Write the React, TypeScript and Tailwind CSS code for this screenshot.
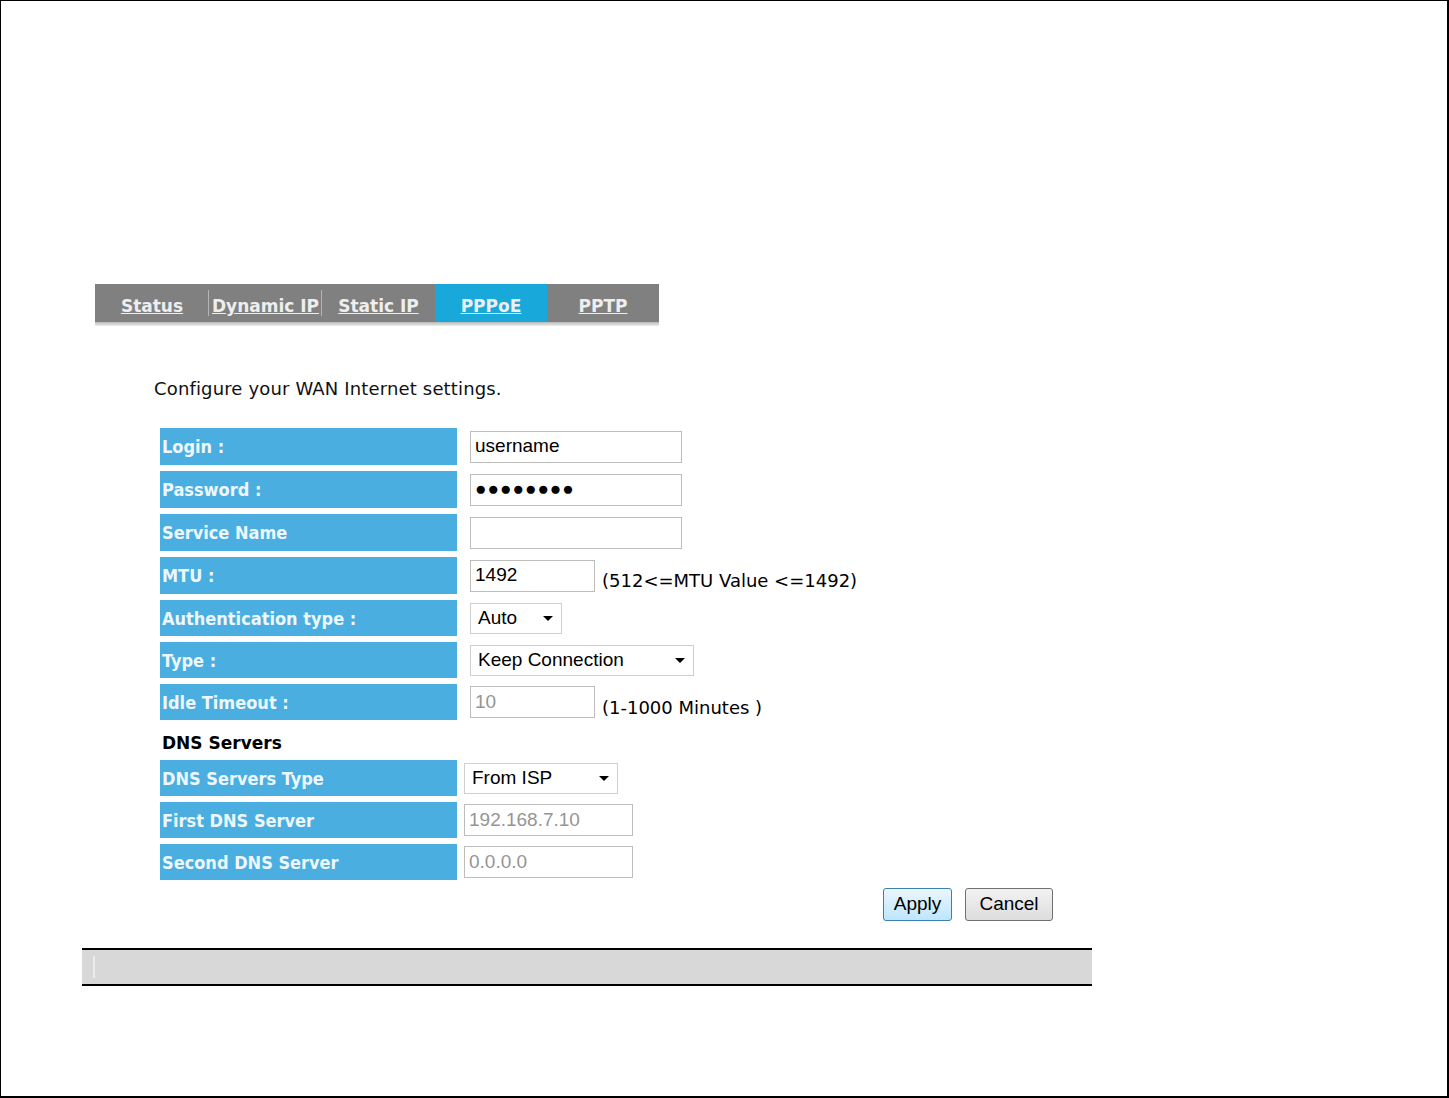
import React from "react";
import clsx from "clsx";

const tabs = [
  { label: "Status", w: "w-[114px]", sep: false, active: false },
  { label: "Dynamic IP", w: "w-[113px]", sep: true, active: false },
  { label: "Static IP", w: "w-[113px]", sep: true, active: false },
  { label: "PPPoE", w: "w-[112px]", sep: false, active: true },
  { label: "PPTP", w: "w-[112px]", sep: false, active: false },
];

function TabBar() {
  return (
    <div className="ml-[94px] w-[564px]">
      <div className="flex h-[38px] bg-[#808080]">
        {tabs.map((t) => (
          <div
            key={t.label}
            className={clsx(
              "relative flex items-center justify-center pt-[6px] font-['DejaVu_Sans',sans-serif] text-[17px] leading-[20px] font-bold text-[#eeeeee] underline",
              t.w,
              t.active && "bg-[#19a8da]"
            )}
          >
            {t.sep && <div className="absolute left-[-1px] top-[6px] h-[26px] w-px bg-[#b5b5b5]" />}
            {t.label}
          </div>
        ))}
      </div>
      <div className="h-[4px] bg-gradient-to-b from-[#b8b8b8] to-[#eeeeee]" />
    </div>
  );
}

function Row({
  label,
  dns,
  h = "h-[36px]",
  children,
}: {
  label: string;
  dns?: boolean;
  h?: string;
  children?: React.ReactNode;
}) {
  return (
    <div className={clsx("flex items-center", h)}>
      <div className="flex h-full w-[297px] items-center bg-[#4aafe0] pl-[2px] font-['DejaVu_Sans_Condensed','DejaVu_Sans',sans-serif] text-[18px] font-bold text-[#eef7fd]">
        {label}
      </div>
      <div className={clsx("flex items-center", dns ? "pl-[7px]" : "pl-[13px]")}>{children}</div>
    </div>
  );
}

function TextBox({ className, value, disabled }: { className: string; value?: string; disabled?: boolean }) {
  return (
    <div
      className={clsx(
        "flex h-[32px] items-center border border-[#bdbdbd] bg-white pl-[4px] font-['Liberation_Sans',Arial,sans-serif] text-[19px]",
        disabled ? "text-[#959595]" : "text-black",
        className
      )}
    >
      {value}
    </div>
  );
}

function Select({ className, value }: { className: string; value: string }) {
  return (
    <div
      className={clsx(
        "flex h-[31px] items-center justify-between border border-[#cfcfcf] bg-white pl-[7px] pr-[8px] font-['Liberation_Sans',Arial,sans-serif] text-[19px] text-black",
        className
      )}
    >
      <span>{value}</span>
      <span className="h-0 w-0 border-x-[5px] border-t-[5px] border-x-transparent border-t-black" />
    </div>
  );
}

const hint = "ml-[7px] pt-[10px] font-['DejaVu_Sans',sans-serif] text-[18px] text-black";

export default function App() {
  return (
    <div className="h-[1098px] w-[1449px] border-b-2 border-l border-r-2 border-t border-black bg-white">
      <div className="pt-[283px]">
        <TabBar />

        <p className="ml-[153px] mt-[52px] font-['DejaVu_Sans',sans-serif] text-[18px] leading-[22px] tracking-[0.15px] text-[#111]">
          Configure your WAN Internet settings.
        </p>

        <div className="ml-[159px] mt-[28px] flex flex-col gap-[6px]">
          <Row label="Login :" h="h-[37px]">
            <TextBox className="w-[212px]" value="username" />
          </Row>
          <Row label="Password :" h="h-[37px]">
            <TextBox className="w-[212px] text-[14px] tracking-[1px]" value="●●●●●●●●" />
          </Row>
          <Row label="Service Name" h="h-[37px]">
            <TextBox className="w-[212px]" />
          </Row>
          <Row label="MTU :" h="h-[37px]">
            <TextBox className="w-[125px]" value="1492" />
            <span className={hint}>(512&lt;=MTU Value &lt;=1492)</span>
          </Row>
          <Row label="Authentication type :">
            <Select className="w-[92px]" value="Auto" />
          </Row>
          <Row label="Type :">
            <Select className="w-[224px]" value="Keep Connection" />
          </Row>
          <Row label="Idle Timeout :">
            <TextBox className="w-[125px]" value="10" disabled />
            <span className={hint}>(1-1000 Minutes )</span>
          </Row>

          <div className="h-[28px] pl-[2px] pt-[7px] font-['DejaVu_Sans',sans-serif] text-[17px] font-bold leading-[20px] text-black">
            DNS Servers
          </div>

          <Row label="DNS Servers Type" dns>
            <Select className="w-[154px]" value="From ISP" />
          </Row>
          <Row label="First DNS Server" dns>
            <TextBox className="w-[169px]" value="192.168.7.10" disabled />
          </Row>
          <Row label="Second DNS Server" dns>
            <TextBox className="w-[169px]" value="0.0.0.0" disabled />
          </Row>
        </div>

        <div className="mt-[8px] flex w-[1052px] justify-end gap-[13px]">
          <button className="h-[33px] w-[69px] rounded-[3px] border border-[#3c7fb1] bg-gradient-to-b from-[#eaf6fd] to-[#bee6fd] font-['Liberation_Sans',Arial,sans-serif] text-[19px] text-black">
            Apply
          </button>
          <button className="h-[33px] w-[88px] rounded-[3px] border border-[#707070] bg-gradient-to-b from-[#f2f2f2] to-[#dddddd] font-['Liberation_Sans',Arial,sans-serif] text-[19px] text-black">
            Cancel
          </button>
        </div>

        <div className="relative ml-[81px] mt-[27px] h-[38px] w-[1010px] border-y-2 border-black bg-[#d8d8d8]">
          <div className="absolute left-[11px] top-[6px] h-[22px] w-[2px] bg-[#ececec]" />
        </div>
      </div>
    </div>
  );
}
